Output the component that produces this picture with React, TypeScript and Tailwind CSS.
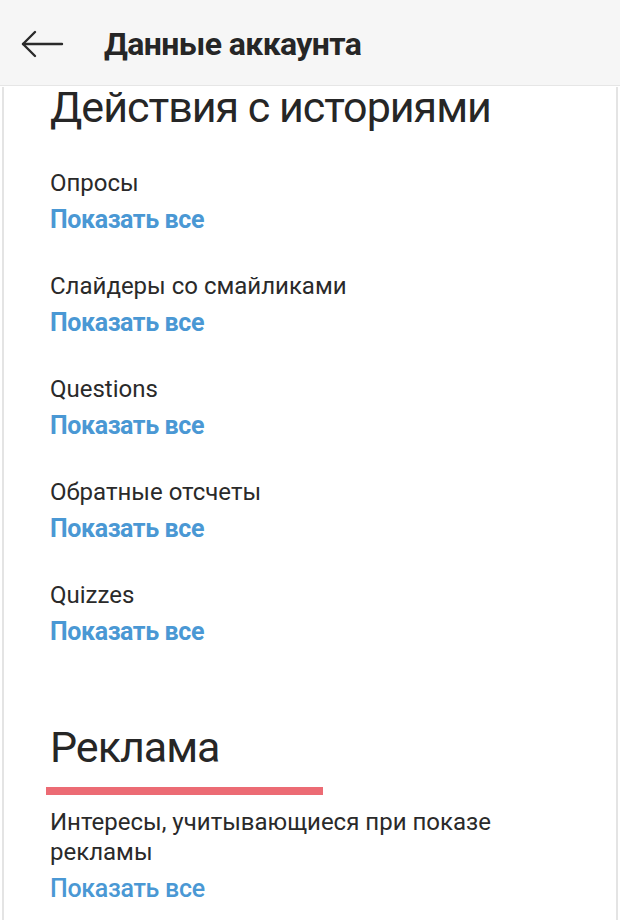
import React from "react";

const items = ["Опросы", "Слайдеры со смайликами", "Questions", "Обратные отсчеты", "Quizzes"];

export default function App() {
  return (
    <div className="w-[620px] h-[920px] overflow-hidden bg-white text-[#262626]" style={{ fontFamily: "Roboto, 'Noto Sans', sans-serif" }}>
      <div className="h-[86px] bg-[#f6f6f6] border-b border-[#e6e6e6] flex items-center">
        <svg className="ml-[20px] mt-[2px]" width="44" height="30" viewBox="0 0 44 30" fill="none" stroke="#2a2a2a" strokeWidth="2.4" strokeLinecap="round" strokeLinejoin="round">
          <path d="M42 15H3" />
          <path d="M15 3L3 15L15 27" />
        </svg>
        <div className="ml-[40px] mt-[2px] text-[32px] leading-[40px] font-bold text-[#262626] tracking-[-0.6px]">Данные аккаунта</div>
      </div>
      <div className="h-[834px] mx-[2px] border-x-2 border-[#e4e4e4] pl-[46px]">
        <div className="mt-[1px] text-[43px] leading-[40px] tracking-[-1px] text-[#262626]">Действия с историями</div>
        <div className="mt-[42px] flex flex-col gap-[37px]">
          {items.map((t) => (
            <div key={t} className="flex flex-col">
              <div className="text-[24px] leading-[28px] text-[#2a2a2a]">{t}</div>
              <div className="text-[25px] leading-[30px] mt-[8px] font-bold tracking-[-0.4px] text-[#4a98d4]">Показать все</div>
            </div>
          ))}
        </div>
        <div className="mt-[80px] text-[43px] leading-[40px] tracking-[-1px]">Реклама</div>
        <div className="mt-[20px] ml-[-4px] w-[277px] h-[8px] bg-[#ec6b74]" />
        <div className="mt-[12px] text-[24px] leading-[30px] w-[480px] text-[#2a2a2a]">Интересы, учитывающиеся при показе рекламы</div>
        <div className="mt-[7px] text-[25px] leading-[30px] font-medium tracking-[-0.3px] text-[#4a98d4]">Показать все</div>
      </div>
    </div>
  );
}
